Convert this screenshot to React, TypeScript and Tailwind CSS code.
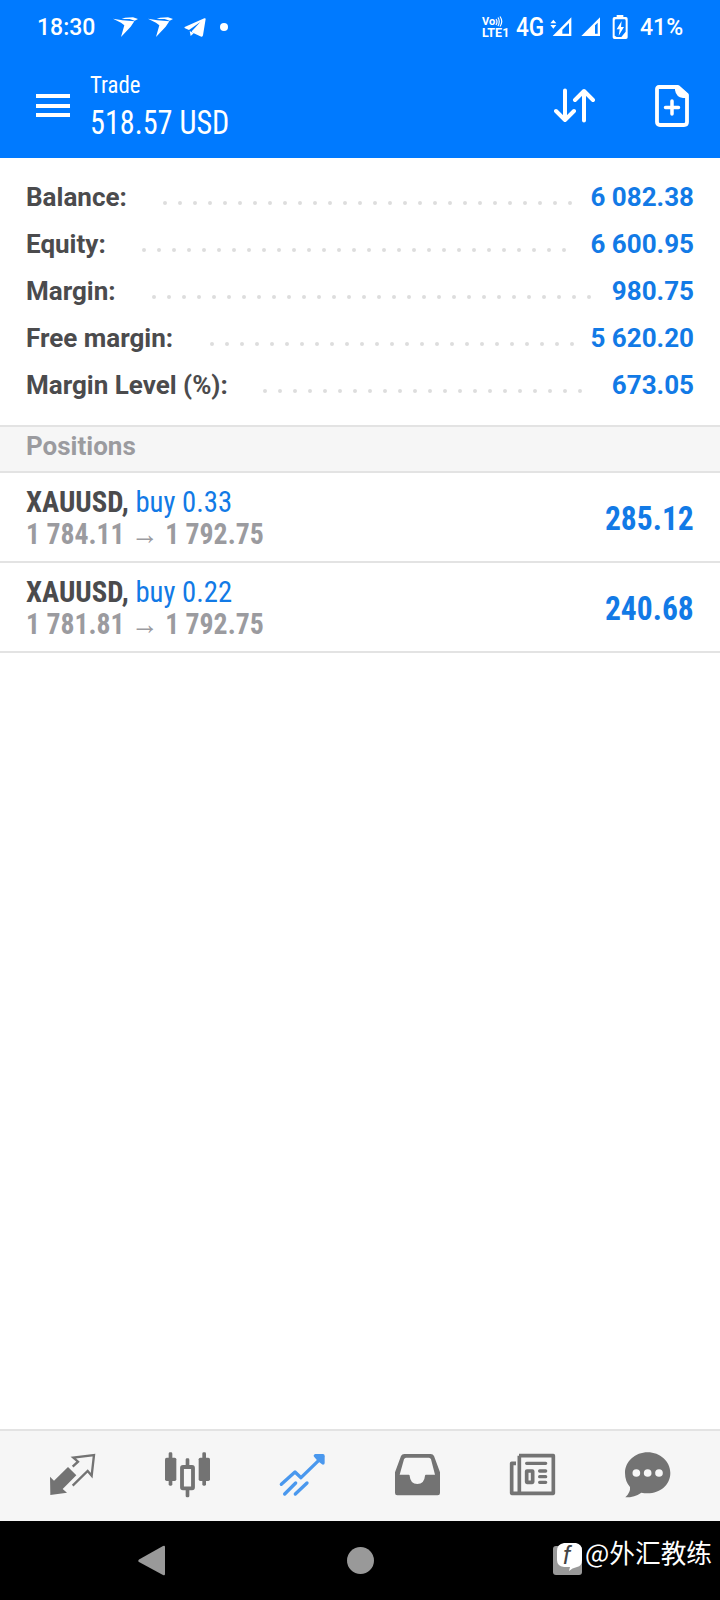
import React from "react";

const summary = [
  { label: "Balance:", value: "6 082.38", dots: 28, width: "w-[131.500px]" },
  { label: "Equity:", value: "6 600.95", dots: 29, width: "w-[110.500px]" },
  { label: "Margin:", value: "980.75", dots: 30, width: "w-[120.500px]" },
  { label: "Free margin:", value: "5 620.20", dots: 25, width: "w-[178.500px]" },
  { label: "Margin Level (%):", value: "673.05", dots: 22, width: "w-[231.500px]" },
];

const positions = [
  { symbol: "XAUUSD", side: "buy 0.33", open: "1 784.11", current: "1 792.75", profit: "285.12" },
  { symbol: "XAUUSD", side: "buy 0.22", open: "1 781.81", current: "1 792.75", profit: "240.68" },
];

const Swallow = () => (
  <svg className="h-5 w-[25px]" viewBox="0 0 75 60" fill="white">
    <path d="M0 5 L28 10 L64 13 L53 29 L24 60 L34 25 L24 17 Z" />
    <path d="M26 6 L36 2 L60 1 L75 6 L65 11 L50 6 Z" />
  </svg>
);

const StatusBar = () => (
  <div className="flex h-[54px] items-center pl-[37px] text-white">
    <span className="w-[76px] text-[23px] font-medium leading-none">18:30</span>
    <Swallow />
    <div className="w-[10px]" />
    <Swallow />
    <svg className="ml-[11px] h-[19px] w-[22px]" viewBox="0 0 66 57" fill="white">
      <path d="M2 27 Q0 29 3 31 L15 36 L49 12 L24 39 L23 43 L52 56 Q56 57 57 52 L65 3 Q65 0 61 1 Z" />
      <path d="M17 39 L20 54 L29 46 Z" />
    </svg>
    <div className="ml-[14px] h-2 w-2 rounded-full bg-white" />

    <div className="ml-[254px] flex w-[27px] flex-col">
      <div className="flex h-[11px] items-center">
        <span className="text-[11px] font-bold leading-[11px]">Vo</span>
        <svg className="h-[11px] w-2" viewBox="0 0 8 11" fill="none" stroke="white" strokeWidth="1.2">
          <path d="M1 3 Q3 5.500 1 9 M3 1.500 Q5.500 5.500 3 10 M5 0.500 Q8.500 5.500 5 10.500" />
        </svg>
      </div>
      <span className="text-[12.500px] font-bold leading-[12px]">LTE1</span>
    </div>
    <span className="ml-[7px] w-[34px] origin-left scale-x-[0.87] text-[26px] font-medium leading-none">4G</span>
    <svg className="h-[20px] w-[22px]" viewBox="0 0 66 60" fill="white">
      <path d="M1 19 L10 8 L19 19 Z M1 24 L19 24 L10 35 Z" />
      <path fillRule="evenodd" d="M8 57 L64 1 L64 57 Z M37 38 L37 50 L57 50 L57 18 Z" />
    </svg>
    <svg className="ml-[9px] h-[20px] w-[20px]" viewBox="0 0 60 60" fill="white">
      <path fillRule="evenodd" d="M1 57 L57 1 L57 57 Z M42 25 L42 50 L50 50 L50 17 Z" />
    </svg>
    <svg className="ml-[11px] h-6 w-4" viewBox="0 0 48 72" fill="white">
      <path
        fillRule="evenodd"
        d="M14 0 H34 V6 H42 Q47 6 47 11 V67 Q47 72 42 72 H7 Q2 72 2 67 V11 Q2 6 7 6 H14 Z M12 13 Q8 13 8 17 V62 L14 66 H28 L41 50 V17 Q41 13 37 13 Z"
      />
      <path d="M29 18 L14 43 H23 L20 62 L36 36 H27 Z" />
    </svg>
    <span className="ml-[12px] text-[23px] font-medium leading-none">41%</span>
  </div>
);

const Header = () => (
  <header className="h-[158px] bg-[#007aff] text-white">
    <StatusBar />
    <div className="flex h-[104px] items-start pl-9">
      <div className="mt-10 flex w-[34px] flex-col gap-[5.500px]">
        <div className="h-1 bg-white" />
        <div className="h-1 bg-white" />
        <div className="h-1 bg-white" />
      </div>
      <div className="ml-5 mt-[17px] w-[160px] whitespace-nowrap [font-stretch:75%]">
        <div className="origin-left scale-x-[0.95] text-[24px] leading-[28px]">Trade</div>
        <div className="mt-[3px] origin-left scale-x-[0.915] text-[33px] leading-[42px]">518.57 USD</div>
      </div>
      <svg className="ml-[304px] mt-[33px] h-[38px] w-[42px]" viewBox="0 0 42 38" fill="none" stroke="white" strokeWidth="4" strokeLinecap="round" strokeLinejoin="round">
        <path d="M11 3.500 V33 M2 24 L11 33 L20 24 M30 33.500 V4 M21 13 L30 4 L39 13" />
      </svg>
      <svg className="ml-[58px] mt-[30px] h-[44px] w-[36px]" viewBox="0 0 36 44" fill="none">
        <path d="M5 3 H24 L33 11 V38 Q33 41 30 41 H6 Q3 41 3 38 V5 Q3 3 5 3 Z" stroke="white" strokeWidth="3.800" strokeLinejoin="round" />
        <path d="M21 2 H25 L34 10 V14 H29 Q22 13 21 6 Z" fill="white" />
        <path d="M18 17 V30 M11.500 23.500 H24.500" stroke="white" strokeWidth="3.500" strokeLinecap="round" />
      </svg>
    </div>
  </header>
);

const TabBar = () => (
  <nav className="flex h-[92px] items-start border-t-2 border-[#e3e3e3] bg-[#f6f6f6] pl-[50px] pt-[23px] text-[#737373]">
    {/* Quotes */}
    <svg className="h-[46px] w-[46px] overflow-visible" viewBox="0 0 138 138">
      <path d="M0 68 L12 80 L54 39 L79 64 L38 105 L51 116 L1 123 Z" fill="currentColor" />
      <path d="M68 38 L84 23 L70 11 L132 3 L125 65 L113 51 L68 95" fill="none" stroke="currentColor" strokeWidth="7" />
    </svg>
    {/* Charts */}
    <svg className="ml-[69px] h-[46px] w-[46px] overflow-visible" viewBox="0 0 138 138" fill="currentColor">
      <rect x="11" y="-5" width="11" height="100" rx="4" />
      <rect x="0" y="11" width="34" height="70" rx="5" />
      <rect x="112" y="-5" width="11" height="100" rx="4" />
      <rect x="101" y="11" width="34" height="70" rx="5" />
      <rect x="62" y="13" width="11" height="117" rx="4" />
      <rect x="51" y="39" width="33" height="64" rx="3" fill="#f6f6f6" stroke="currentColor" strokeWidth="11.500" />
    </svg>
    {/* Trade, the active tab */}
    <svg className="ml-[69px] h-[46px] w-[46px] overflow-visible text-[#4a98ee]" viewBox="0 0 138 138" fill="none" stroke="currentColor" strokeWidth="10" strokeLinecap="round">
      <path d="M4 91 L45 54 L63 71 L128 8" strokeLinejoin="round" />
      <path d="M106 5 H129 V27 L117 18 Z" fill="currentColor" strokeLinejoin="round" />
      <path d="M14 120 L47 87 M46 120 L81 87" />
    </svg>
    {/* History */}
    <svg className="ml-[69px] h-[46px] w-[46px] overflow-visible" viewBox="0 0 138 138" fill="currentColor">
      <path fillRule="evenodd" d="M28 0 H107 Q114 0 117 6 L135 55 V117 Q135 124 128 124 H7 Q0 124 0 117 V55 L18 6 Q21 0 28 0 Z M33 11 Q29 11 27 16 L14 62 H41 Q44 62 44 65 Q46 90 67 90 Q88 90 90 65 Q90 62 93 62 H120 L108 16 Q106 11 102 11 Z" />
    </svg>
    {/* News */}
    <svg className="ml-[69px] h-[46px] w-[46px] overflow-visible" viewBox="0 0 138 138" fill="none" stroke="currentColor" strokeWidth="11">
      <path d="M27 5 H130 V118 H5 V28 H18 M28 5 V118" strokeLinejoin="round" />
      <path d="M50 28 H107 M89 51 H107 M89 68 H107 M89 85 H107" strokeLinecap="round" strokeWidth="10" />
      <rect x="50" y="51" width="18" height="34" rx="1" />
    </svg>
    {/* Messages */}
    <svg className="ml-[69px] h-[46px] w-[46px] overflow-visible" viewBox="0 0 138 138">
      <path d="M68 -5 C105 -5 136 22 136 57 C136 93 105 118 68 118 Q58 118 49 116 Q30 130 1 130 Q17 115 15 99 Q0 82 0 57 C0 22 31 -5 68 -5 Z" fill="currentColor" />
      <g fill="#f6f6f6">
        <circle cx="34" cy="57" r="11.500" />
        <circle cx="68" cy="57" r="11.500" />
        <circle cx="102" cy="57" r="11.500" />
      </g>
    </svg>
  </nav>
);

const SystemBar = () => (
  <div className="flex h-[79px] items-start bg-black">
    <svg className="ml-[138px] mt-6 h-[31px] w-[27px]" viewBox="0 0 27 31">
      <path d="M1 14.500 L25 1 Q27 0 27 2 V29 Q27 31 25 30 L1 17 Q-0.500 16 1 14.500 Z" fill="#999999" />
    </svg>
    <div className="ml-[182px] mt-[26px] h-[27px] w-[27px] rounded-full bg-[#999999]" />
    <div className="relative ml-[179px] mt-[25px] h-[29px] w-[29px] rounded-[3px] bg-[#999999]">
      <svg className="absolute -top-[3px] left-[4px] h-[29px] w-[25px]" viewBox="0 0 25 29" fill="white">
        <path d="M7 0 H19 Q25 1 25 8 V17 Q25 23 20 24 Q15 25 12 28 L13 24 H7 Q0 23 0 17 V8 Q0 1 7 0 Z" />
      </svg>
      <span className="absolute left-[10px] top-[-3px] font-['Liberation_Sans',sans-serif] text-[25px] italic leading-none text-[#444444]">f</span>
    </div>
    <div className="ml-[3px] mt-[14px] whitespace-nowrap font-['Noto_Sans_CJK_SC',sans-serif] text-[25.700px] leading-[34px] text-white">@外汇教练</div>
  </div>
);

export default function App() {
  return (
    <div className="flex h-[1600px] w-[720px] flex-col overflow-hidden bg-white font-[Roboto,sans-serif]">
      <Header />
      <main className="flex-1">
        <section className="h-[267px] pl-[26px] pr-[26px] pt-[16px] text-[26px] font-bold">
          {summary.map((row) => (
            <div key={row.label} className="flex h-[47px] items-center whitespace-nowrap leading-[47px]">
              <span className={`${row.width} shrink-0 text-[#4b4b4d]`}>{row.label}</span>
              <span className="flex pt-[10px]">
                {Array.from({ length: row.dots }, (_, i) => (
                  <i key={i} className="mx-[5.500px] h-1 w-1 rounded-full bg-[#dddddd]" />
                ))}
              </span>
              <span className="ml-auto text-[#127ae6]">{row.value}</span>
            </div>
          ))}
        </section>
        <div className="h-12 border-y-2 border-[#e3e3e3] bg-[#f6f6f6] pl-[26px] text-[26px] font-bold leading-[38px] text-[#9b9b9f]">
          Positions
        </div>
        {positions.map((p) => (
          <div key={p.open} className="flex h-[90px] items-center justify-between border-b-2 border-[#e3e3e3] pl-[26px] pr-[26px] pt-[2px] font-bold [font-stretch:75%]">
            <div className="whitespace-nowrap text-[30px] leading-8">
              <div className="origin-left scale-x-[0.957] text-[#4b4b4d]">
                {p.symbol}, <span className="font-normal text-[#127ae6]">{p.side}</span>
              </div>
              <div className="origin-left scale-x-[0.925] text-[#9b9b9f]">
                {p.open} → {p.current}
              </div>
            </div>
            <div className="origin-right scale-x-[0.928] text-[34px] leading-none text-[#127ae6]">{p.profit}</div>
          </div>
        ))}
      </main>
      <TabBar />
      <SystemBar />
    </div>
  );
}
